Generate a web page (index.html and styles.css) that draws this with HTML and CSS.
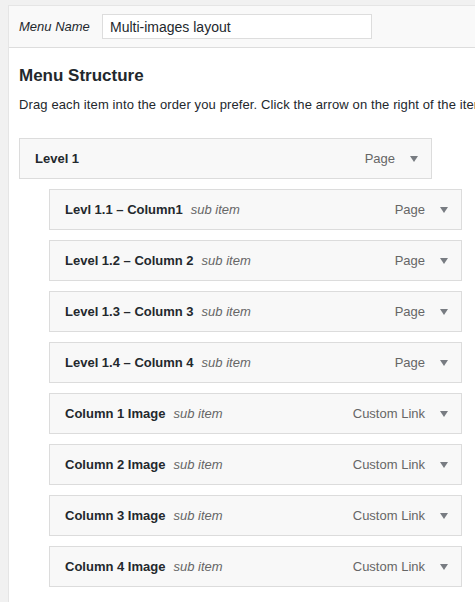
FILE: index.html
```html
<!DOCTYPE html>
<html>
<head>
<meta charset="utf-8">
<link rel="stylesheet" href="styles.css">
</head>
<body>
<div class="panel">
  <div class="header">
    <label class="name-label">Menu Name</label>
    <input class="name-input" type="text" value="Multi-images layout">
  </div>
  <div class="body">
    <h3 class="title">Menu Structure</h3>
    <p class="desc">Drag each item into the order you prefer. Click the arrow on the right of the item to reveal additional configuration options.</p>
    <ul class="menu">
      <li class="item">
        <span class="item-title">Level 1</span>
        <span class="item-type">Page</span>
        <span class="item-arrow"><svg width="8" height="6" viewBox="0 0 8 6"><polygon points="0,0 8,0 4,6" fill="#787c82"/></svg></span>
      </li>
      <li class="item sub">
        <span class="item-title">Levl 1.1 – Column1</span><span class="item-sub">sub item</span>
        <span class="item-type">Page</span>
        <span class="item-arrow"><svg width="8" height="6" viewBox="0 0 8 6"><polygon points="0,0 8,0 4,6" fill="#787c82"/></svg></span>
      </li>
      <li class="item sub">
        <span class="item-title">Level 1.2 – Column 2</span><span class="item-sub">sub item</span>
        <span class="item-type">Page</span>
        <span class="item-arrow"><svg width="8" height="6" viewBox="0 0 8 6"><polygon points="0,0 8,0 4,6" fill="#787c82"/></svg></span>
      </li>
      <li class="item sub">
        <span class="item-title">Level 1.3 – Column 3</span><span class="item-sub">sub item</span>
        <span class="item-type">Page</span>
        <span class="item-arrow"><svg width="8" height="6" viewBox="0 0 8 6"><polygon points="0,0 8,0 4,6" fill="#787c82"/></svg></span>
      </li>
      <li class="item sub">
        <span class="item-title">Level 1.4 – Column 4</span><span class="item-sub">sub item</span>
        <span class="item-type">Page</span>
        <span class="item-arrow"><svg width="8" height="6" viewBox="0 0 8 6"><polygon points="0,0 8,0 4,6" fill="#787c82"/></svg></span>
      </li>
      <li class="item sub">
        <span class="item-title">Column 1 Image</span><span class="item-sub">sub item</span>
        <span class="item-type">Custom Link</span>
        <span class="item-arrow"><svg width="8" height="6" viewBox="0 0 8 6"><polygon points="0,0 8,0 4,6" fill="#787c82"/></svg></span>
      </li>
      <li class="item sub">
        <span class="item-title">Column 2 Image</span><span class="item-sub">sub item</span>
        <span class="item-type">Custom Link</span>
        <span class="item-arrow"><svg width="8" height="6" viewBox="0 0 8 6"><polygon points="0,0 8,0 4,6" fill="#787c82"/></svg></span>
      </li>
      <li class="item sub">
        <span class="item-title">Column 3 Image</span><span class="item-sub">sub item</span>
        <span class="item-type">Custom Link</span>
        <span class="item-arrow"><svg width="8" height="6" viewBox="0 0 8 6"><polygon points="0,0 8,0 4,6" fill="#787c82"/></svg></span>
      </li>
      <li class="item sub">
        <span class="item-title">Column 4 Image</span><span class="item-sub">sub item</span>
        <span class="item-type">Custom Link</span>
        <span class="item-arrow"><svg width="8" height="6" viewBox="0 0 8 6"><polygon points="0,0 8,0 4,6" fill="#787c82"/></svg></span>
      </li>
    </ul>
  </div>
</div>
</body>
</html>
```

FILE: styles.css
```css
html, body {
  margin: 0;
  padding: 0;
  background: #f1f1f1;
  font-family: "Liberation Sans", Arial, sans-serif;
  color: #23282d;
  overflow: hidden;
}

.panel {
  margin: 5px 0 0 8px;
  border-left: 1px solid #e5e5e5;
  border-top: 1px solid #e5e5e5;
  background: #ffffff;
  height: 620px;
  overflow: hidden;
}

.header {
  height: 41px;
  padding: 0 10px;
  background: #f9f9f9;
  border-bottom: 1px solid #dddddd;
  display: flex;
  align-items: center;
}

.name-label {
  font-style: italic;
  font-size: 13px;
  color: #23282d;
  width: 83px;
  flex-shrink: 0;
}

.name-input {
  box-sizing: border-box;
  width: 270px;
  height: 25px;
  margin: 0;
  padding: 0 7px;
  border: 1px solid #dddddd;
  background: #ffffff;
  font-family: "Liberation Sans", Arial, sans-serif;
  font-size: 14px;
  color: #23282d;
  outline: none;
}

.body {
  padding: 17px 10px 0 10px;
}

.title {
  margin: 0;
  font-size: 17px;
  line-height: 22px;
  font-weight: bold;
  color: #23282d;
}

.desc {
  margin: 8px 0 0 0;
  font-size: 13px;
  line-height: 19px;
  letter-spacing: 0.12px;
  color: #23282d;
  white-space: nowrap;
}

.menu {
  list-style: none;
  margin: 24px 0 0 0;
  padding: 0;
  display: flex;
  flex-direction: column;
  gap: 10px;
}

.item {
  box-sizing: border-box;
  width: 413px;
  height: 41px;
  border: 1px solid #dcdcdc;
  background: #f8f8f8;
  display: flex;
  align-items: center;
  padding-left: 15px;
  font-size: 13px;
}

.item.sub {
  margin-left: 30px;
}

.item-title {
  font-weight: bold;
  color: #23282d;
}

.item-sub {
  margin-left: 8px;
  font-style: italic;
  color: #666666;
}

.item-type {
  margin-left: auto;
  color: #666666;
}

.item-arrow {
  width: 36px;
  padding-left: 2px;
  box-sizing: border-box;
  display: flex;
  justify-content: center;
  align-items: center;
}

.item-arrow svg {
  display: block;
}
```
